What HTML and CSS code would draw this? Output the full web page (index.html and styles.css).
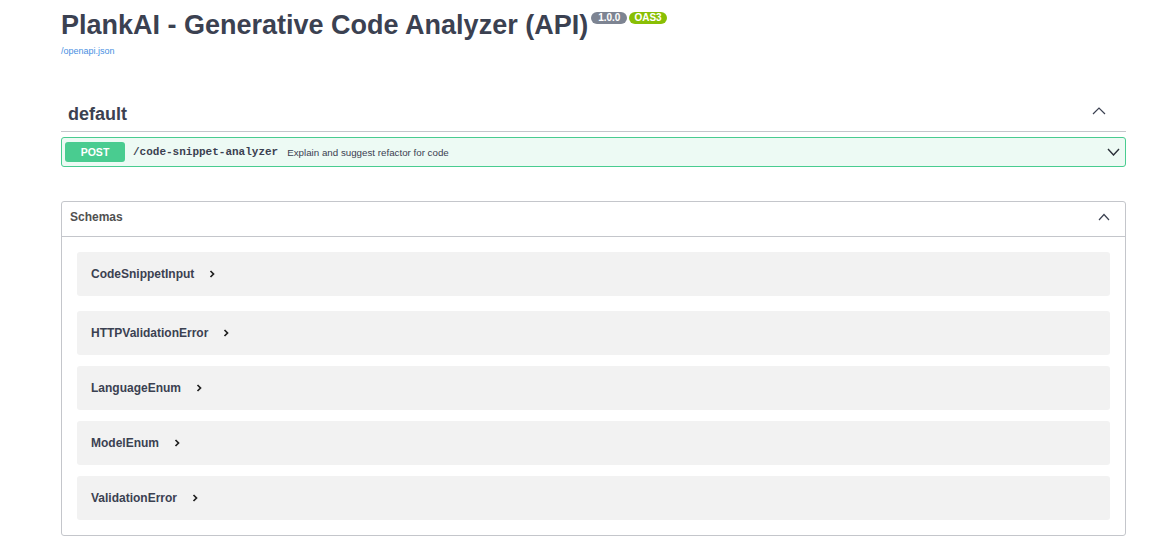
FILE: index.html
```html
<!DOCTYPE html>
<html lang="en">
<head>
<meta charset="utf-8">
<title>PlankAI - Generative Code Analyzer (API)</title>
<link rel="stylesheet" href="styles.css">
</head>
<body>
<div class="page">
  <div class="info">
    <h2 class="title"><span class="title-text">PlankAI - Generative Code Analyzer (API)</span><span class="badges"><span class="badge badge-ver">1.0.0</span><span class="badge badge-oas">OAS3</span></span></h2>
    <a class="url" href="#">/openapi.json</a>
  </div>

  <div class="tag-section">
    <div class="tag">
      <span class="tag-name">default</span>
      <svg class="tag-arrow" width="14" height="8" viewBox="0 0 14 8"><path d="M1 7L7 1L13 7" fill="none" stroke="#3b4151" stroke-width="1.2"/></svg>
    </div>
    <div class="opblock">
      <div class="summary">
        <span class="method">POST</span>
        <span class="path">/code-snippet-analyzer</span>
        <span class="desc">Explain and suggest refactor for code</span>
        <svg class="op-arrow" width="13" height="8" viewBox="0 0 13 8"><path d="M1 1L6.5 7L12 1" fill="none" stroke="#2b2f38" stroke-width="1.4"/></svg>
      </div>
    </div>
  </div>

  <section class="models">
    <div class="models-head">
      <h4 class="models-title">Schemas</h4>
      <svg class="models-arrow" width="12" height="14" viewBox="0 0 12 14"><path d="M1 10L6 4.5L11 10" fill="none" stroke="#3b4151" stroke-width="1.2"/></svg>
    </div>
    <div class="models-body">
      <div class="model"><span class="model-title">CodeSnippetInput</span><svg class="model-arrow" width="6" height="8" viewBox="0 0 6 8"><path d="M1.5 1L4.5 4L1.5 7" fill="none" stroke="#1f1f1f" stroke-width="1.7"/></svg></div>
      <div class="model"><span class="model-title">HTTPValidationError</span><svg class="model-arrow" width="6" height="8" viewBox="0 0 6 8"><path d="M1.5 1L4.5 4L1.5 7" fill="none" stroke="#1f1f1f" stroke-width="1.7"/></svg></div>
      <div class="model"><span class="model-title">LanguageEnum</span><svg class="model-arrow" width="6" height="8" viewBox="0 0 6 8"><path d="M1.5 1L4.5 4L1.5 7" fill="none" stroke="#1f1f1f" stroke-width="1.7"/></svg></div>
      <div class="model"><span class="model-title">ModelEnum</span><svg class="model-arrow" width="6" height="8" viewBox="0 0 6 8"><path d="M1.5 1L4.5 4L1.5 7" fill="none" stroke="#1f1f1f" stroke-width="1.7"/></svg></div>
      <div class="model"><span class="model-title">ValidationError</span><svg class="model-arrow" width="6" height="8" viewBox="0 0 6 8"><path d="M1.5 1L4.5 4L1.5 7" fill="none" stroke="#1f1f1f" stroke-width="1.7"/></svg></div>
    </div>
  </section>
</div>
</body>
</html>
```
FILE: styles.css
```css
* { box-sizing: border-box; }
html, body {
  margin: 0;
  padding: 0;
  background: #ffffff;
  font-family: "Liberation Sans", Arial, sans-serif;
  color: #3b4151;
}
.page {
  padding: 10px 35px 0 61px;
}

/* info */
.title {
  margin: 0;
  display: flex;
  align-items: flex-start;
  font-size: 27px;
  line-height: 31px;
  font-weight: 700;
  color: #3b4151;
}
.badges {
  display: flex;
  margin: 2px 0 0 3px;
  gap: 2px;
}
.badge {
  display: block;
  height: 12px;
  line-height: 12px;
  font-size: 10px;
  font-weight: 700;
  color: #ffffff;
  border-radius: 57px;
}
.badge-ver { background: #7d8492; padding: 0 7px; }
.badge-oas { background: #89bf04; padding: 0 5px; }
.url {
  display: block;
  margin-top: 4px;
  font-size: 9px;
  line-height: 12px;
  color: #4990e2;
  text-decoration: none;
}

/* tag */
.tag-section { margin-top: 39px; }
.tag {
  display: flex;
  justify-content: space-between;
  align-items: flex-start;
  padding: 8px 20px 6px 7px;
  border-bottom: 1px solid #c4c6cb;
}
.tag-name {
  font-size: 18px;
  line-height: 21px;
  font-weight: 700;
  color: #3b4151;
}
.tag-arrow { margin-top: 3px; display: block; }

.opblock {
  margin-top: 5px;
  border: 1px solid #49cc90;
  background: #edfaf4;
  border-radius: 3px;
}
.summary {
  display: flex;
  align-items: center;
  padding: 4px 5px 4px 3px;
}
.method {
  width: 60px;
  height: 20px;
  line-height: 20px;
  text-align: center;
  background: #49cc90;
  color: #ffffff;
  font-size: 10.5px;
  font-weight: 700;
  border-radius: 3px;
}
.path {
  padding: 0 9px 0 8px;
  font-family: "Liberation Mono", "DejaVu Sans Mono", monospace;
  font-size: 11px;
  font-weight: 700;
  color: #3b4151;
}
.desc {
  font-size: 9.75px;
  color: #3b4151;
}
.op-arrow { margin-left: auto; display: block; }

/* models */
.models {
  margin-top: 34px;
  border: 1px solid #c4c6cb;
  border-radius: 3px;
}
.models-head {
  display: flex;
  justify-content: space-between;
  align-items: flex-start;
  padding: 8px 15px 12px 8px;
  border-bottom: 1px solid #c4c6cb;
}
.models-title {
  margin: 0;
  font-size: 12px;
  line-height: 14px;
  font-weight: 700;
  color: #505050;
}
.models-arrow { display: block; }
.models-body {
  padding: 15px;
}
.model {
  display: flex;
  align-items: center;
  height: 44px;
  padding-left: 14px;
  background: #f2f2f2;
  border-radius: 3px;
  margin-bottom: 11px;
}
.model:first-child { margin-bottom: 15px; }
.model:last-child { margin-bottom: 0; }
.model-title {
  font-size: 12px;
  font-weight: 700;
  color: #3b4151;
}
.model-arrow {
  display: block;
  margin-left: 15px;
}
```
